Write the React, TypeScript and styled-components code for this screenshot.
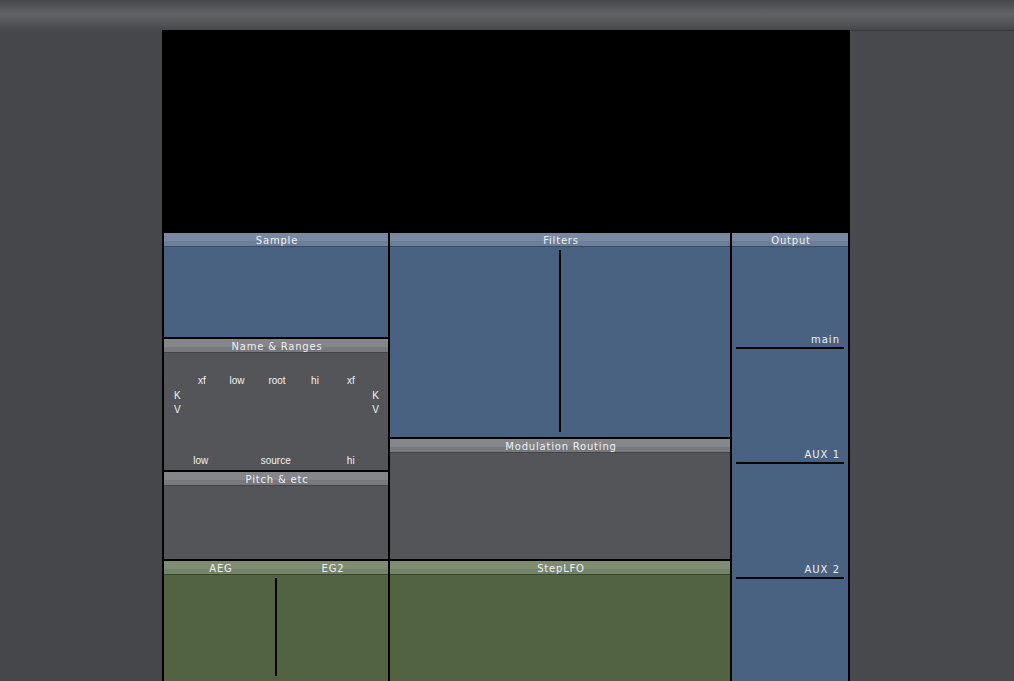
import React from 'react';
import styled, { createGlobalStyle, css } from 'styled-components';

type Tone = 'blue' | 'gray' | 'green';

const tones = {
  blue: { top: '#7889a1', bottom: '#6d7f98', line: '#3b4b61', body: '#4a6282' },
  gray: { top: '#858689', bottom: '#78797c', line: '#444548', body: '#545559' },
  green: { top: '#7f8c72', bottom: '#738367', line: '#3a492e', body: '#526342' },
};

const GlobalStyle = createGlobalStyle`
  html, body {
    margin: 0;
    height: 100%;
    overflow: hidden;
    background: #46474b;
  }
  body {
    font-family: "DejaVu Sans", "Liberation Sans", sans-serif;
  }
`;

const TopBar = styled.div`
  height: 30px;
  background: linear-gradient(to bottom, #46474b 0%, #5b5c5f 35%, #616265 50%, #58595c 70%, #46474a 100%);
`;

const Main = styled.div`
  display: flex;
  height: 651px;
`;

const Gutter = styled.div<{ $right?: boolean }>`
  width: 162px;
  background: #46474b;
  ${(p) =>
    p.$right &&
    css`
      width: auto;
      flex: 1;
      background: #48494d;
      border-top: 1px solid #3a3b3e;
    `}
`;

const Rack = styled.div`
  width: 684px;
  padding: 0 2px;
  background: #000;
  display: flex;
  flex-direction: column;
  overflow: hidden;
`;

const Display = styled.div`
  height: 203px;
  flex-shrink: 0;
`;

const Columns = styled.div`
  display: flex;
  gap: 2px;
`;

const Column = styled.div<{ $w: number }>`
  width: ${(p) => p.$w}px;
  display: flex;
  flex-direction: column;
  gap: 2px;
`;

const Panel = styled.div<{ $tone: Tone; $h: number }>`
  height: ${(p) => p.$h}px;
  background: ${(p) => tones[p.$tone].body};
  display: flex;
  flex-direction: column;
  flex-shrink: 0;
`;

const Header = styled.div<{ $tone: Tone }>`
  height: 13px;
  border-bottom: 1px solid ${(p) => tones[p.$tone].line};
  background: linear-gradient(
    to bottom,
    ${(p) => tones[p.$tone].top} 0%,
    ${(p) => tones[p.$tone].top} 58%,
    ${(p) => tones[p.$tone].bottom} 58%,
    ${(p) => tones[p.$tone].bottom} 100%
  );
  display: flex;
  align-items: flex-start;
  flex-shrink: 0;
`;

const Title = styled.div`
  flex: 1;
  text-align: center;
  color: #eef1f5;
  font-size: 10px;
  line-height: 13px;
  padding: 1px 0 0 2px;
  height: 12px;
  letter-spacing: 0.8px;
  white-space: nowrap;
`;

const Body = styled.div`
  flex: 1;
  display: flex;
  flex-direction: column;
  min-height: 0;
`;

const Divider = styled.div<{ $top: number; $h: number }>`
  width: 2px;
  height: ${(p) => p.$h}px;
  margin: ${(p) => p.$top}px auto 0;
  background: #000;
`;

const Ranges = styled.div`
  flex: 1;
  display: flex;
  flex-direction: column;
  padding: 21px 0 2px;
  color: #f2f2f2;
  font-family: "Liberation Sans", Arial, sans-serif;
  font-size: 10px;
  line-height: 14px;
`;

const LabelRow = styled.div`
  display: grid;
  grid-template-columns: 38px 32px 48px 28px 44px;
  padding-left: 19px;
  text-align: center;
`;

const SideRow = styled.div<{ $gap?: number }>`
  display: flex;
  justify-content: space-between;
  padding: 0 9px 0 10px;
  margin-top: ${(p) => p.$gap ?? 0}px;
`;

const BottomRow = styled.div`
  margin-top: auto;
  display: grid;
  grid-template-columns: repeat(5, 37.5px);
  padding-left: 18px;
  text-align: center;
`;

const OutBody = styled(Body)`
  padding-top: 87px;
  gap: 100px;
`;

const Slot = styled.div`
  margin: 0 4px;
  display: flex;
  flex-direction: column;
`;

const SlotLabel = styled.div`
  text-align: right;
  padding-right: 4px;
  margin-bottom: 1px;
  color: #eef1f5;
  font-size: 10px;
  line-height: 12px;
  letter-spacing: 1px;
`;

const SlotLine = styled.div`
  height: 2px;
  background: #000;
`;

const outputs = ['main', 'AUX 1', 'AUX 2'];

export default function App() {
  return (
    <>
      <GlobalStyle />
      <TopBar />
      <Main>
        <Gutter />
        <Rack>
          <Display />
          <Columns>
            <Column $w={224}>
              <Panel $tone="blue" $h={104}>
                <Header $tone="blue"><Title>Sample</Title></Header>
                <Body />
              </Panel>
              <Panel $tone="gray" $h={131}>
                <Header $tone="gray"><Title>Name &amp; Ranges</Title></Header>
                <Ranges>
                  <LabelRow>
                    <span>xf</span><span>low</span><span>root</span><span>hi</span><span>xf</span>
                  </LabelRow>
                  <SideRow $gap={1}><span>K</span><span>K</span></SideRow>
                  <SideRow><span>V</span><span>V</span></SideRow>
                  <BottomRow>
                    <span>low</span><span /><span>source</span><span /><span>hi</span>
                  </BottomRow>
                </Ranges>
              </Panel>
              <Panel $tone="gray" $h={87}>
                <Header $tone="gray"><Title>Pitch &amp; etc</Title></Header>
                <Body />
              </Panel>
              <Panel $tone="green" $h={130}>
                <Header $tone="green">
                  <Title>AEG</Title>
                  <Title>EG2</Title>
                </Header>
                <Body>
                  <Divider $top={3} $h={98} />
                </Body>
              </Panel>
            </Column>
            <Column $w={340}>
              <Panel $tone="blue" $h={204}>
                <Header $tone="blue"><Title>Filters</Title></Header>
                <Body>
                  <Divider $top={3} $h={182} />
                </Body>
              </Panel>
              <Panel $tone="gray" $h={120}>
                <Header $tone="gray"><Title>Modulation Routing</Title></Header>
                <Body />
              </Panel>
              <Panel $tone="green" $h={130}>
                <Header $tone="green"><Title>StepLFO</Title></Header>
                <Body />
              </Panel>
            </Column>
            <Column $w={116}>
              <Panel $tone="blue" $h={460}>
                <Header $tone="blue"><Title>Output</Title></Header>
                <OutBody>
                  {outputs.map((o) => (
                    <Slot key={o}>
                      <SlotLabel>{o}</SlotLabel>
                      <SlotLine />
                    </Slot>
                  ))}
                </OutBody>
              </Panel>
            </Column>
          </Columns>
        </Rack>
        <Gutter $right />
      </Main>
    </>
  );
}
